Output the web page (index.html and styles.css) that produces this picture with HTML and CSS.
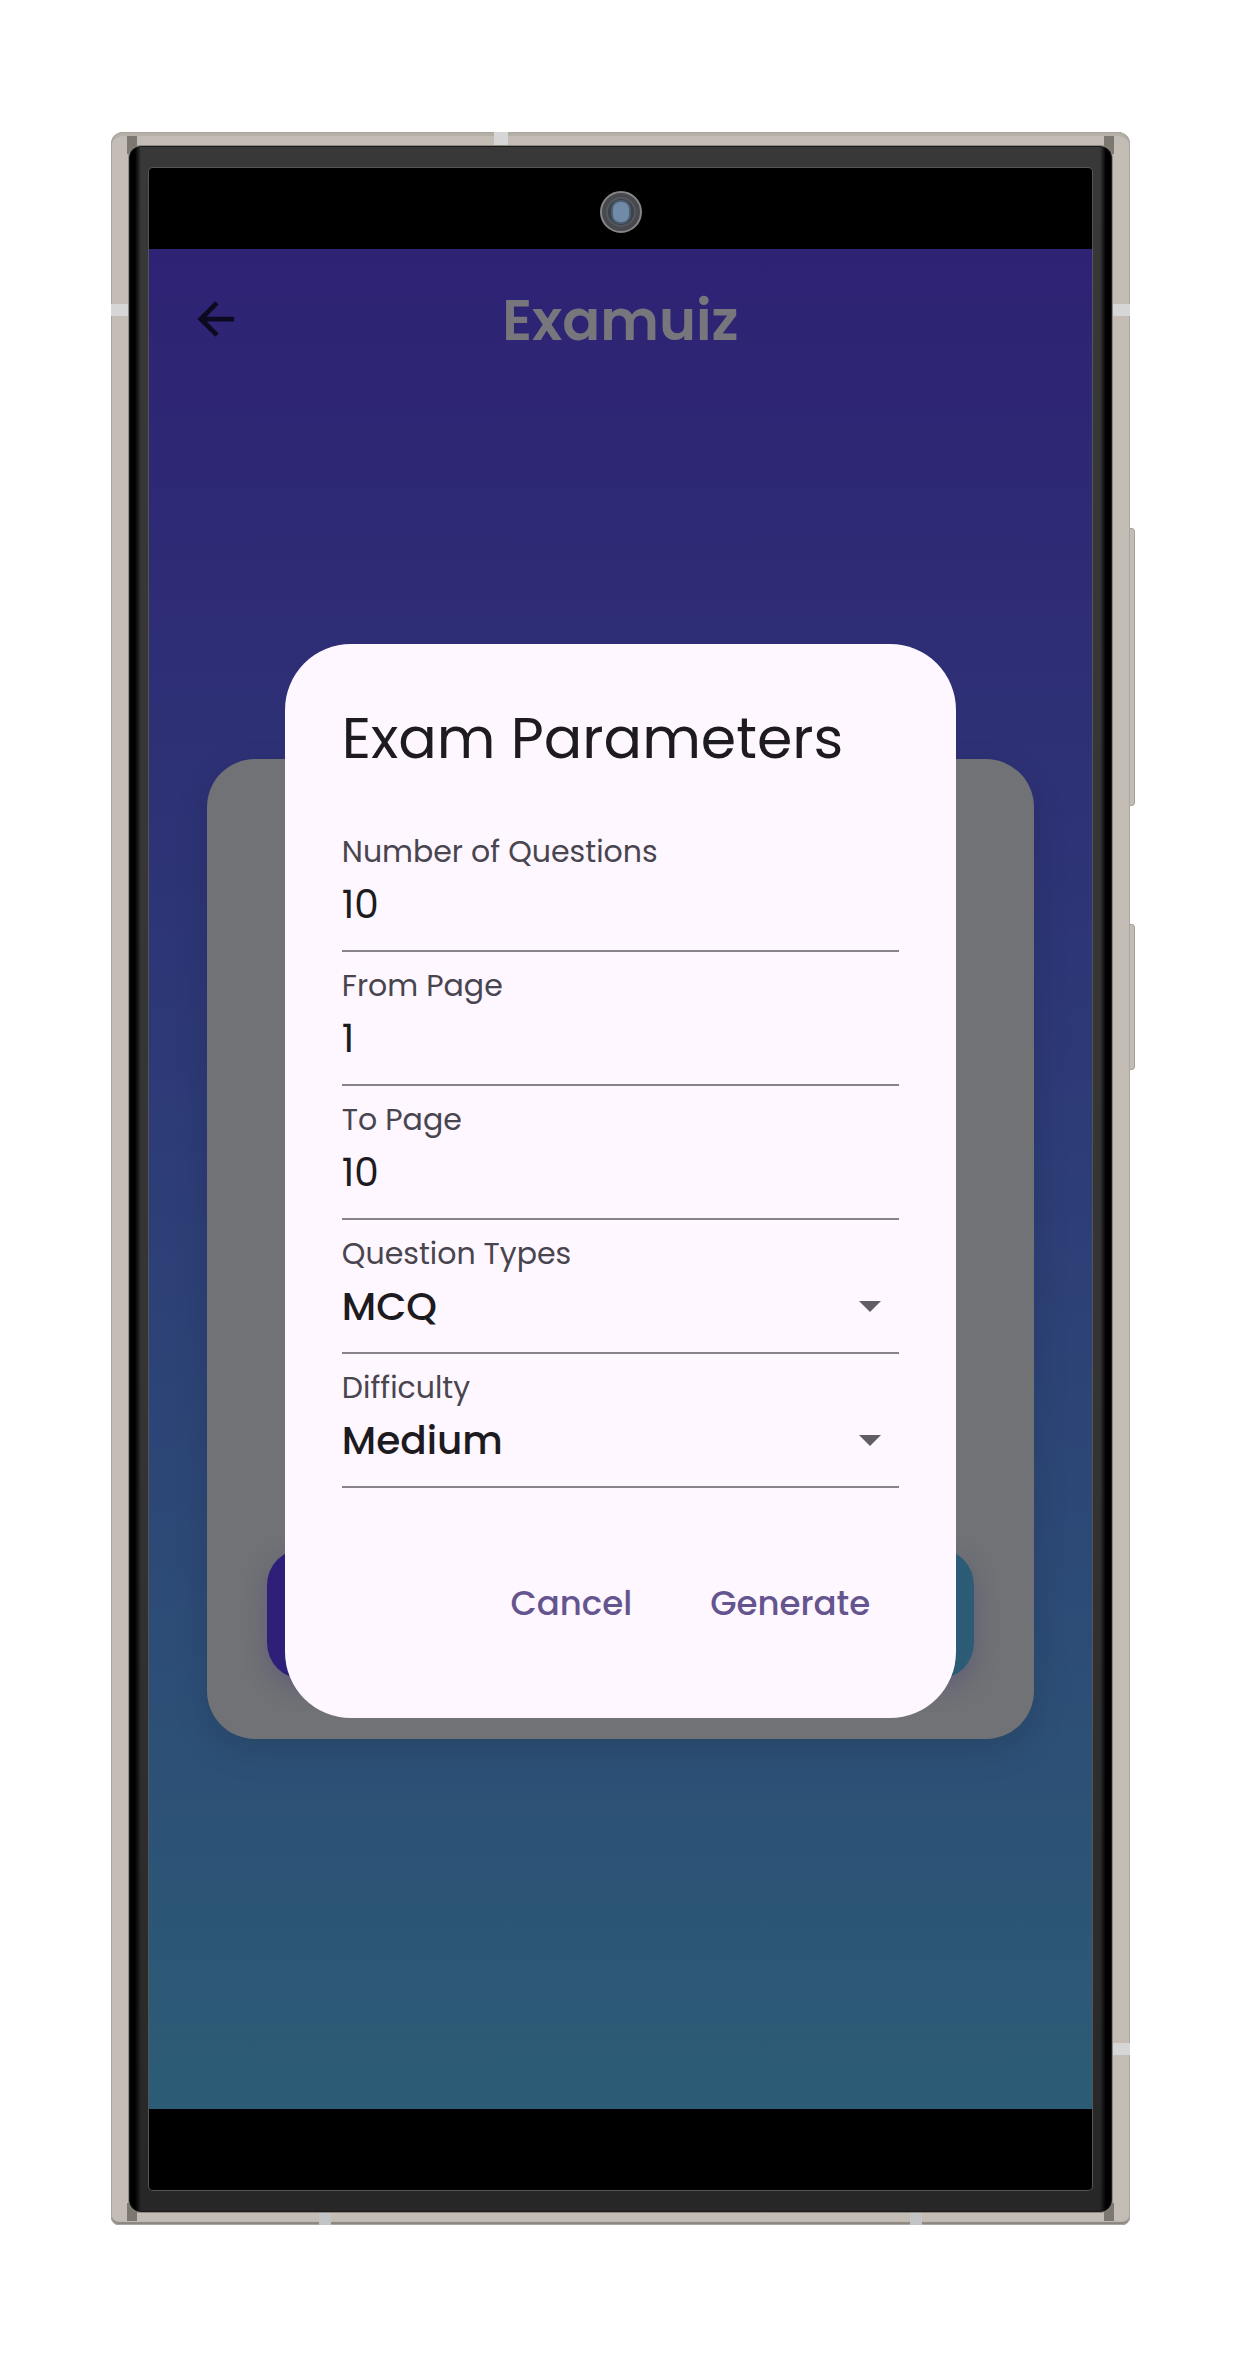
FILE: index.html
```html
<!DOCTYPE html>
<html lang="en">
<head>
  <meta charset="utf-8">
  <meta name="viewport" content="width=device-width, initial-scale=1">
  <title>Examuiz</title>
  <link rel="stylesheet" href="styles.css">
</head>
<body>
  <div class="phone">
    <span class="band band-top"></span>
    <span class="band band-left"></span>
    <span class="band band-right"></span>
    <span class="band band-right-low"></span>
    <span class="band band-bottom-start"></span>
    <span class="band band-bottom-end"></span>
    <span class="corner corner-tl"></span>
    <span class="corner corner-tr"></span>
    <span class="corner corner-bl"></span>
    <span class="corner corner-br"></span>
    <span class="side-key volume"></span>
    <span class="side-key power"></span>
    <div class="bezel">
      <div class="display">
        <div class="letterbox">
          <svg class="camera" viewBox="0 0 42 42" aria-hidden="true">
            <circle cx="21" cy="21" r="20" fill="#47494c" stroke="#858585" stroke-width="2"/>
            <circle cx="21" cy="21" r="14" fill="#3b4149" stroke="#53585e" stroke-width="2"/>
            <rect x="11" y="9" width="20" height="24" rx="9" fill="#4d5d6e"/>
            <rect x="13" y="11" width="16" height="20" rx="7" fill="#6f8ba8"/>
          </svg>
        </div>
        <div class="screen">
          <div class="app">
            <header class="app-bar">
              <button class="back" type="button" aria-label="Back">
                <svg viewBox="0 0 40 40" aria-hidden="true">
                  <path d="M39 20H5M21 3L4 20l17 17" fill="none" stroke="#0c0a20" stroke-width="5"/>
                </svg>
              </button>
              <h1 class="brand">Examuiz</h1>
            </header>
            <main class="content">
              <section class="card">
                <div class="card-action"></div>
              </section>
            </main>
          </div>
          <form class="dialog" role="dialog" aria-labelledby="dialog-title">
            <h2 class="dialog-title" id="dialog-title">Exam Parameters</h2>
            <div class="field">
              <label for="count">Number of Questions</label>
              <input id="count" type="text" inputmode="numeric" value="10">
            </div>
            <div class="field">
              <label for="from">From Page</label>
              <input id="from" type="text" inputmode="numeric" value="1">
            </div>
            <div class="field">
              <label for="to">To Page</label>
              <input id="to" type="text" inputmode="numeric" value="10">
            </div>
            <div class="field field-select">
              <label for="types">Question Types</label>
              <select id="types">
                <option>MCQ</option>
              </select>
              <svg class="caret" viewBox="0 0 22 11" aria-hidden="true"><path d="M0 0h22L11 11z" fill="#605e64"/></svg>
            </div>
            <div class="field field-select">
              <label for="difficulty">Difficulty</label>
              <select id="difficulty">
                <option>Medium</option>
              </select>
              <svg class="caret" viewBox="0 0 22 11" aria-hidden="true"><path d="M0 0h22L11 11z" fill="#605e64"/></svg>
            </div>
            <div class="actions">
              <button type="button">Cancel</button>
              <button type="button">Generate</button>
            </div>
          </form>
        </div>
        <div class="letterbox"></div>
      </div>
    </div>
  </div>
</body>
</html>
```

FILE: styles.css
```css
* {
  box-sizing: border-box;
}

body {
  margin: 0;
  padding: 132px 115px 132px 111px;
  background: #fff;
  font-family: Poppins, Inter, "Open Sans", sans-serif;
}

/* Metal frame */
.phone {
  position: relative;
  padding: 14px 18px 13px;
  border-radius: 12px 12px 8px 8px;
  background: #c3bdb6;
  box-shadow: inset 0 0 0 1px #aaa69f, inset 0 -3px 1px #8b867f, inset 0 4px 1px #b4aea7;
}

.band {
  position: absolute;
  background: #d6d6d6;
}

.band-top {
  top: 0;
  left: 383px;
  width: 14px;
  height: 13px;
}

.band-left,
.band-right,
.band-right-low {
  width: 18px;
  height: 12px;
}

.band-left {
  top: 172px;
  left: 0;
}

.band-right {
  top: 172px;
  right: 0;
}

.band-right-low {
  right: 0;
  bottom: 170px;
}

.band-bottom-start,
.band-bottom-end {
  bottom: 0;
  width: 12px;
  height: 13px;
  background: #c2c3c4;
}

.band-bottom-start {
  left: 208px;
}

.band-bottom-end {
  right: 208px;
}

.corner {
  position: absolute;
  width: 10px;
  height: 18px;
  background: #7c776f;
}

.corner-tl {
  top: 4px;
  left: 16px;
}

.corner-tr {
  top: 4px;
  right: 16px;
}

.corner-bl {
  bottom: 4px;
  left: 16px;
}

.corner-br {
  right: 16px;
  bottom: 4px;
}

.side-key {
  position: absolute;
  left: 100%;
  width: 5px;
  border: 1px solid #a39e97;
  border-left: 0;
  border-radius: 0 4px 4px 0;
  background: #c3bdb6;
}

.volume {
  top: 396px;
  height: 278px;
}

.power {
  top: 792px;
  height: 146px;
}

.bezel {
  position: relative;
  padding: 22px 20px;
  border-radius: 12px;
  background:
    linear-gradient(90deg, #000 6px, transparent 12px),
    linear-gradient(270deg, #000 6px, transparent 12px),
    linear-gradient(#383838, #343434 60%, #272727);
  box-shadow: 0 0 0 1px #8f8a84, inset 0 0 0 1px #1a1a1a;
}

.display {
  border-radius: 4px;
  background: #000;
  box-shadow: 0 0 0 1px #555;
}

.letterbox {
  display: grid;
  place-items: center;
  height: 81px;
}

.camera {
  width: 42px;
  height: 42px;
  margin-top: 6px;
}

/* App and dialog share one grid cell */
.screen {
  display: grid;
  align-items: center;
  justify-items: center;
  aspect-ratio: 943 / 1860;
  background: linear-gradient(#2e2274, #2d3d77 50%, #2c5c75);
}

.app,
.dialog {
  grid-area: 1 / 1;
}

.app {
  display: flex;
  flex-direction: column;
  width: 100%;
  height: 100%;
}

.app-bar {
  display: grid;
  grid-template-columns: 1fr auto 1fr;
  align-items: center;
  height: 140px;
  padding: 0 48px;
}

.back {
  display: grid;
  justify-self: start;
  padding: 0;
  border: 0;
  background: none;
}

.back svg {
  width: 38px;
  height: 38px;
}

.brand {
  margin: 0;
  padding-top: 4px;
  color: #77767c;
  font-size: 56px;
  font-weight: 600;
  line-height: 72px;
}

.content {
  display: flex;
  flex: 1;
  align-items: center;
  padding: 0 58px;
}

.card {
  display: flex;
  flex: 1;
  align-items: flex-end;
  aspect-ratio: 826 / 978;
  padding: 60px;
  border-radius: 48px;
  background: #717276;
  box-shadow: 0 12px 36px rgba(0, 0, 0, .12);
}

.card-action {
  flex: 1;
  height: 130px;
  border-radius: 36px;
  background: linear-gradient(90deg, #2e1e78, #2c5c76);
  box-shadow: 0 8px 24px rgba(46, 30, 120, .25);
}

.dialog {
  width: 71.2%;
  margin-top: 4px;
  padding: 54px 57px 79px;
  border-radius: 66px;
  background: #fef7ff;
  color: #1d1b20;
}

.dialog-title {
  margin: 0 0 40px;
  font-size: 57px;
  font-weight: 400;
  line-height: 80px;
  white-space: nowrap;
}

.field {
  position: relative;
  display: flex;
  flex-direction: column;
  gap: 8px;
  padding: 14px 0 20px;
  border-bottom: 2px solid #89848c;
}

.field label {
  color: #49454f;
  font-size: 30px;
  line-height: 40px;
}

.field input,
.field select {
  width: 100%;
  height: 50px;
  margin: 0;
  padding: 0;
  border: 0;
  outline: 0;
  appearance: none;
  background: none;
  color: inherit;
  font: inherit;
  font-size: 39px;
  line-height: 50px;
}

.field select {
  font-weight: 500;
}

.caret {
  position: absolute;
  right: 18px;
  bottom: 40px;
  width: 22px;
  height: 11px;
  pointer-events: none;
}

.actions {
  display: flex;
  justify-content: flex-end;
  gap: 20px;
  margin-top: 79px;
}

.actions button {
  height: 72px;
  padding: 0 29px;
  border: 0;
  background: none;
  color: #65558f;
  font: inherit;
  font-size: 34px;
  font-weight: 500;
}
```
